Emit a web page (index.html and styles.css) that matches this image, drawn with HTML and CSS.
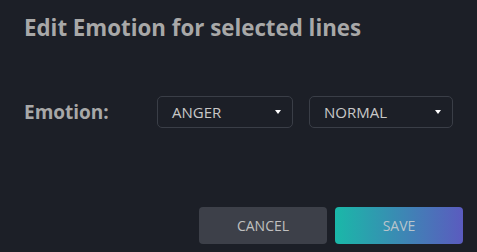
FILE: index.html
```html
<!DOCTYPE html>
<html lang="en">
<head>
  <meta charset="UTF-8">
  <meta name="viewport" content="width=device-width, initial-scale=1.0">
  <title>Edit Emotion</title>
  <link rel="stylesheet" href="styles.css">
</head>
<body>
  <div class="dialog">
    <!-- Título do diálogo -->
    <h2 class="dialog-title">Edit Emotion for selected lines</h2>

    <!-- Linha de emoção -->
    <div class="emotion-row">
      <label class="emotion-label">Emotion:</label>
      <div class="select select-emotion">
        <span>ANGER</span>
        <span class="caret"></span>
      </div>
      <div class="select select-level">
        <span>NORMAL</span>
        <span class="caret"></span>
      </div>
    </div>

    <!-- Botões -->
    <div class="actions">
      <button class="btn btn-cancel">CANCEL</button>
      <button class="btn btn-save">SAVE</button>
    </div>
  </div>
</body>
</html>
```

FILE: styles.css
```css
html, body {
  margin: 0;
  padding: 0;
}

body {
  font-family: 'Open Sans', sans-serif;
  background-color: #1c1f27;
  color: #c8c8c8;
  width: 477px;
  height: 252px;
  overflow: hidden;
}

.dialog {
  display: flex;
  flex-direction: column;
  height: 252px;
  box-sizing: border-box;
  padding: 13px 14px 8px 24px;
}

.dialog-title {
  margin: 0;
  font-size: 22.3px;
  font-weight: 700;
  line-height: 30px;
  color: #a8a8a8;
}

.emotion-row {
  display: flex;
  align-items: center;
  margin-top: 53px;
}

.emotion-label {
  width: 133px;
  font-size: 19px;
  font-weight: 700;
  color: #a8a8a8;
}

.select {
  display: flex;
  align-items: center;
  justify-content: space-between;
  box-sizing: border-box;
  height: 32px;
  padding: 0 11px 0 14px;
  border: 1px solid #3a3e47;
  border-radius: 5px;
  font-size: 15px;
  color: #c8c8c8;
}

.select-emotion {
  width: 136px;
}

.select-level {
  width: 144px;
  margin-left: 16px;
}

.caret {
  width: 0;
  height: 0;
  border-left: 3px solid transparent;
  border-right: 3px solid transparent;
  border-top: 4px solid #ffffff;
}

.actions {
  display: flex;
  justify-content: flex-end;
  gap: 8px;
  margin-top: auto;
}

.btn {
  width: 128px;
  height: 37px;
  border: none;
  border-radius: 4px;
  font-family: 'Open Sans', sans-serif;
  font-size: 14px;
  cursor: pointer;
}

.btn-cancel {
  background-color: #3d4049;
  color: #c0c0c0;
}

.btn-save {
  background: linear-gradient(90deg, #1ab8a8, #5b5bbf);
  color: #b8c4cc;
}
```
